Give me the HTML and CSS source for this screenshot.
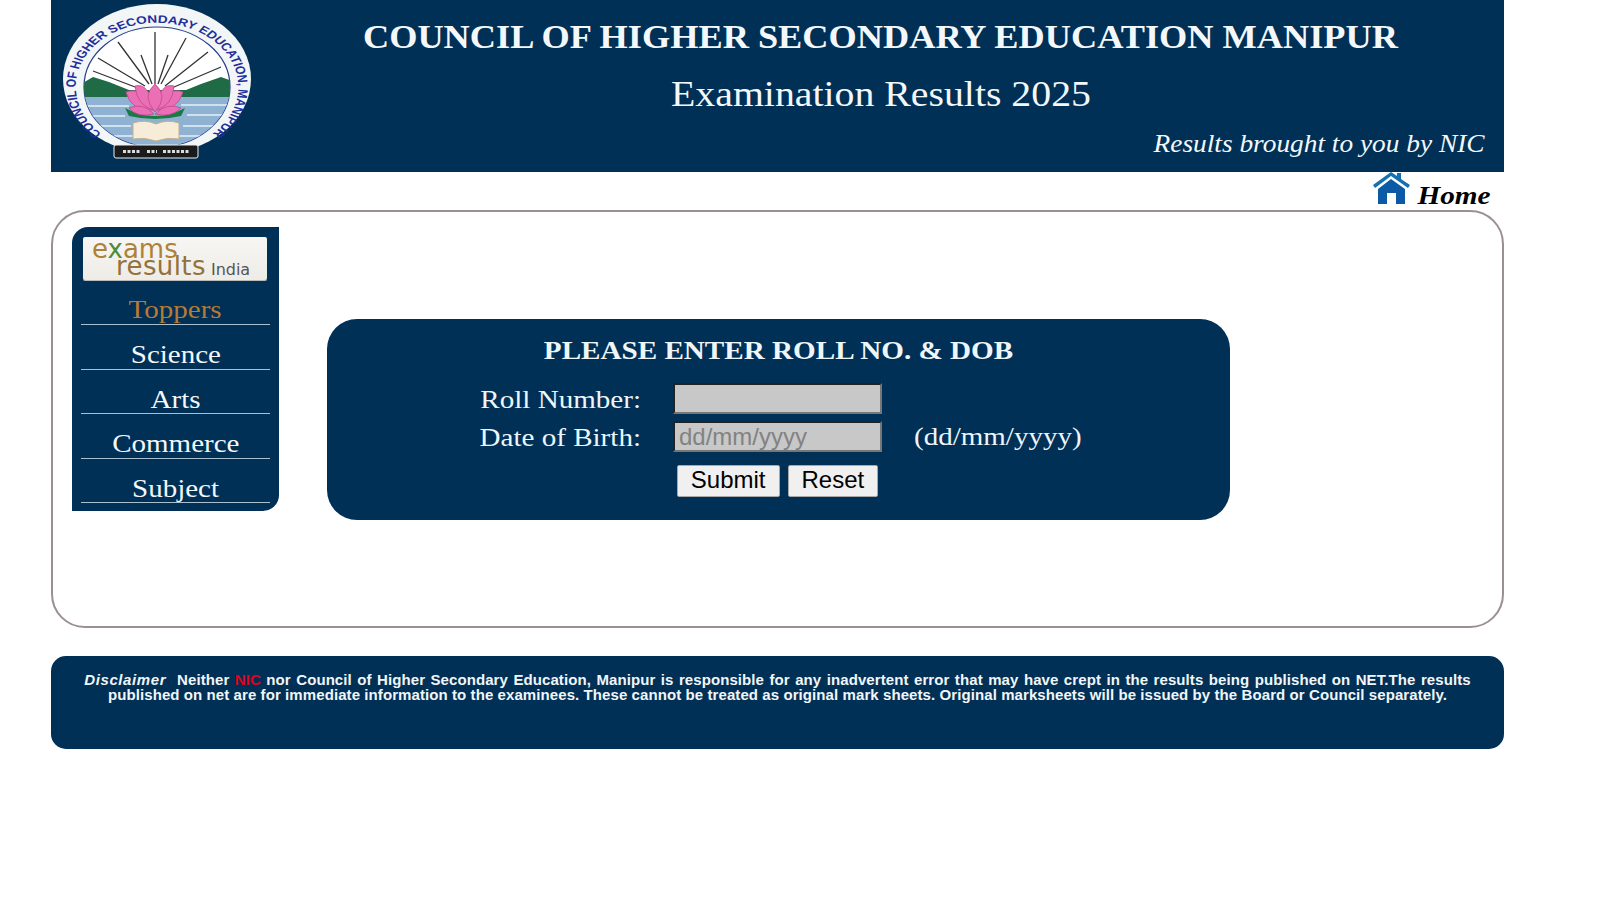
FILE: index.html
```html
<!DOCTYPE html>
<html lang="en">
<head>
<meta charset="utf-8">
<title>Examination Results 2025</title>
<link rel="stylesheet" href="styles.css">
</head>
<body>
<div class="page">
  <header class="banner">
    <svg class="seal" viewBox="0 0 206 170" width="206" height="170" aria-label="Council seal">
      <defs>
        <path id="ring" d="M -37 52 A 64 64 0 1 1 37 52"/>
        <clipPath id="inner"><ellipse cx="106" cy="87" rx="73" ry="60"/></clipPath>
      </defs>
      <ellipse cx="106" cy="79" rx="94" ry="75" fill="#f3f6f7"/>
      <ellipse cx="106" cy="87" rx="73" ry="60" fill="#fff" stroke="#26408e" stroke-width="1.2"/>
      <g transform="translate(106 87) scale(1.27 1)">
        <text class="seal-ring"><textPath href="#ring" startOffset="50%" text-anchor="middle">COUNCIL OF HIGHER SECONDARY EDUCATION, MANIPUR</textPath></text>
      </g>
      <g clip-path="url(#inner)">
        <path d="M30 84 L42 77 L58 82 L78 90 L135 90 L150 84 L170 77 L184 82 V100 H30Z" fill="#1e6b45"/>
        <rect x="30" y="97" width="156" height="52" fill="#8fb2d2"/>
        <path d="M34 106H78M130 105H182M36 116H74M136 115H180M42 126H80M132 126H172M50 136H84M126 136H164" stroke="#cfe0ee" stroke-width="2"/>
      </g>
      <g stroke="#333" stroke-width="1.3" fill="none">
        <path d="M104 84V32M98 84L67 42M110 84L135 38M94 86L47 58M114 86L157 52M92 90L42 71M116 90L170 67M101 84L90 55M107 84L117 55"/>
      </g>
      <path d="M74 108Q104 124 134 108L130 116Q104 122 78 116Z" fill="#1a7a42"/>
      <g fill="#ea6fb5" stroke="#c2488f" stroke-width=".8">
        <path d="M75 92Q92 86 103 110Q80 112 75 92Z"/>
        <path d="M132 92Q116 86 104 110Q126 112 132 92Z"/>
        <path d="M84 86Q98 82 103 110Q86 106 84 86Z"/>
        <path d="M123 86Q109 82 104 110Q122 106 123 86Z"/>
        <path d="M104 84Q118 96 104 112Q90 96 104 84Z"/>
        <path d="M78 108Q92 102 103 114Q86 118 78 108Z"/>
        <path d="M130 108Q116 102 104 114Q120 118 130 108Z"/>
      </g>
      <path d="M82 123Q94 119 105 124Q116 119 128 123V139Q116 137 105 141Q94 137 82 139Z" fill="#f6ecd8" stroke="#c4b08c"/>
      <rect x="63" y="145" width="84" height="13" rx="2" fill="#1b1b1b" stroke="#eee"/>
      <path d="M72 151.5h18M96 151.5h10M112 151.5h26" stroke="#ddd" stroke-width="3" stroke-dasharray="3 1.5"/>
    </svg>
    <div class="banner-text">
      <h1 class="title"><span class="wide-title">COUNCIL OF HIGHER SECONDARY EDUCATION MANIPUR</span></h1>
      <p class="subtitle"><span class="wide-sub">Examination Results 2025</span></p>
      <p class="credit"><span class="wide-credit">Results brought to you by NIC</span></p>
    </div>
  </header>

  <nav class="home-row">
    <svg class="home-icon" viewBox="0 0 37 32" width="37" height="32" aria-hidden="true">
      <path d="M0 13L18 0L24 4V1H28V7L37 13L35 16L18 4L2 16Z" fill="#1570b2"/>
      <path d="M5 17L18 7L32 17V32H23V21H14V32H5Z" fill="#0c5aa6"/>
    </svg>
    <span class="home-label">Home</span>
  </nav>

  <main class="frame">
    <aside class="side">
      <div class="brand">
        <span class="brand-top">e<span class="brand-x">x</span>ams</span>
        <div class="brand-row">
          <span class="brand-bottom">results</span>
          <span class="brand-india">India</span>
        </div>
      </div>
      <ul class="menu">
        <li class="menu-item menu-active"><span class="wide-menu">Toppers</span></li>
        <li class="menu-item"><span class="wide-menu">Science</span></li>
        <li class="menu-item"><span class="wide-menu">Arts</span></li>
        <li class="menu-item"><span class="wide-menu">Commerce</span></li>
        <li class="menu-item"><span class="wide-menu">Subject</span></li>
      </ul>
    </aside>
    <section class="panel">
      <h2 class="panel-title"><span class="wide-panel">PLEASE ENTER ROLL NO. &amp; DOB</span></h2>
      <form class="form">
        <label class="label" for="roll">Roll Number:</label>
        <input class="field" id="roll" type="text">
        <span></span>
        <label class="label" for="dob">Date of Birth:</label>
        <input class="field" id="dob" type="text" placeholder="dd/mm/yyyy">
        <span class="hint">(dd/mm/yyyy)</span>
        <span></span>
        <div class="actions">
          <button class="btn" type="button">Submit</button>
          <button class="btn" type="button">Reset</button>
        </div>
      </form>
    </section>
  </main>

  <footer class="disclaimer">
    <p class="disclaimer-text"><span class="disc-first"><em class="disc-head">Disclaimer</em> &nbsp;Neither <span class="nic">NIC</span> nor Council of Higher Secondary Education, Manipur is responsible for any inadvertent error that may have crept in the results being published on NET.The results</span> published on net are for immediate information to the examinees. These cannot be treated as original mark sheets. Original marksheets will be issued by the Board or Council separately.</p>
  </footer>
</div>
</body>
</html>
```
FILE: styles.css
```css
* { box-sizing: border-box; }
html, body { margin: 0; padding: 0; background: #fff; }
body { font-family: "Liberation Serif", serif; color: #000; }
.page { width: 1453px; margin-left: 51px; }

.banner { height: 172px; background: #003056; display: flex; color: #f4f8fa; }
.seal { flex: none; width: 206px; height: 170px; }
.seal-ring { font: bold 10.8px "Liberation Sans", sans-serif; fill: #1f2f9c; }
.banner-text { flex: 1; text-align: center; padding-top: 17px; }
.title { margin: 0; font-size: 33px; line-height: 40px; font-weight: bold; }
.wide-title { display: inline-block; transform: scaleX(1.1); }
.subtitle { margin: 17px 0 0; font-size: 36px; line-height: 40px; }
.wide-sub { display: inline-block; transform: scaleX(1.105); }
.credit { margin: 15px 19px 0 0; font-size: 25px; line-height: 30px; font-style: italic; text-align: right; }
.wide-credit { display: inline-block; transform: scaleX(1.094); transform-origin: right center; }

.home-row { height: 38px; display: flex; justify-content: flex-end; align-items: flex-start; gap: 18px; padding-right: 14px; }
.home-label { margin-top: 10px; font-size: 25px; line-height: 28px; font-weight: bold; font-style: italic; transform: scaleX(1.17); transform-origin: right center; }

.frame { height: 418px; border: 2px solid #9b8f96; border-radius: 34px; padding: 15px 0 0 19px; display: flex; align-items: flex-start; gap: 48px; }
.side { width: 207px; height: 284px; background: #003056; border-radius: 16px 0 16px 0; padding: 10px 9px 0; color: #f4f8fa; }
.brand { height: 43px; margin: 0 3px 0 2px; padding-left: 9px; background: linear-gradient(#f8f6f2, #eeece7); border-radius: 2px; box-shadow: 0 1px 0 #bbb; font-family: "DejaVu Sans", sans-serif; display: flex; flex-direction: column; }
.brand-top { height: 17px; font-size: 26px; line-height: 24px; color: #ad8238; }
.brand-x { color: #4b8d3a; }
.brand-row { display: flex; align-items: baseline; gap: 5px; padding-left: 24px; }
.brand-bottom { font-size: 26px; line-height: 24px; letter-spacing: .4px; color: #94723a; }
.brand-india { font-size: 16px; line-height: 24px; color: #555; }
.menu { list-style: none; margin: 0; padding: 0; }
.menu-item { height: 44.5px; padding-top: 15px; border-bottom: 1px solid #a8c0d0; text-align: center; font-size: 25px; line-height: 29px; }
.menu-active { color: #b87a33; height: 45px; }
.wide-menu { display: inline-block; transform: scaleX(1.16); }

.panel { width: 903px; height: 201px; margin-top: 92px; background: #003056; border-radius: 30px; color: #eef6fa; padding-top: 18px; }
.panel-title { margin: 0; text-align: center; font-size: 26px; line-height: 28px; font-weight: bold; }
.wide-panel { display: inline-block; transform: scaleX(1.12); }
.form { display: grid; grid-template-columns: 314px 209px 1fr; column-gap: 32px; row-gap: 7px; margin-top: 18px; }
.label { height: 31px; font-size: 25px; line-height: 33px; text-align: right; transform: scaleX(1.163); transform-origin: right center; }
.field { width: 209px; height: 31px; background: #c8c8c8; border: 2px inset #777; padding: 0 4px; font: 24px "Liberation Sans", sans-serif; color: #000; }
.field::placeholder { color: #828282; opacity: 1; }
.hint { font-size: 25px; line-height: 31px; transform: scaleX(1.16); transform-origin: left center; }
.actions { display: flex; justify-content: center; gap: 8px; margin-top: 6px; }
.btn { height: 32px; padding: 0 13px 2px; background: #f0f0f0; border: 1px solid #a8a8a8; border-radius: 2px; font: 24px "Liberation Sans", sans-serif; color: #000; }

.disclaimer { height: 93px; margin-top: 28px; background: #003056; border-radius: 15px; padding: 16px 30px 0; }
.disclaimer-text { margin: 0; text-align: center; color: #f2f6f8; font: bold 15px/15px "Liberation Sans", sans-serif; letter-spacing: .085px; }
.disc-first { word-spacing: 1.2px; }
.disc-head { font-style: italic; letter-spacing: .6px; }
.nic { color: #e0001b; }
```
